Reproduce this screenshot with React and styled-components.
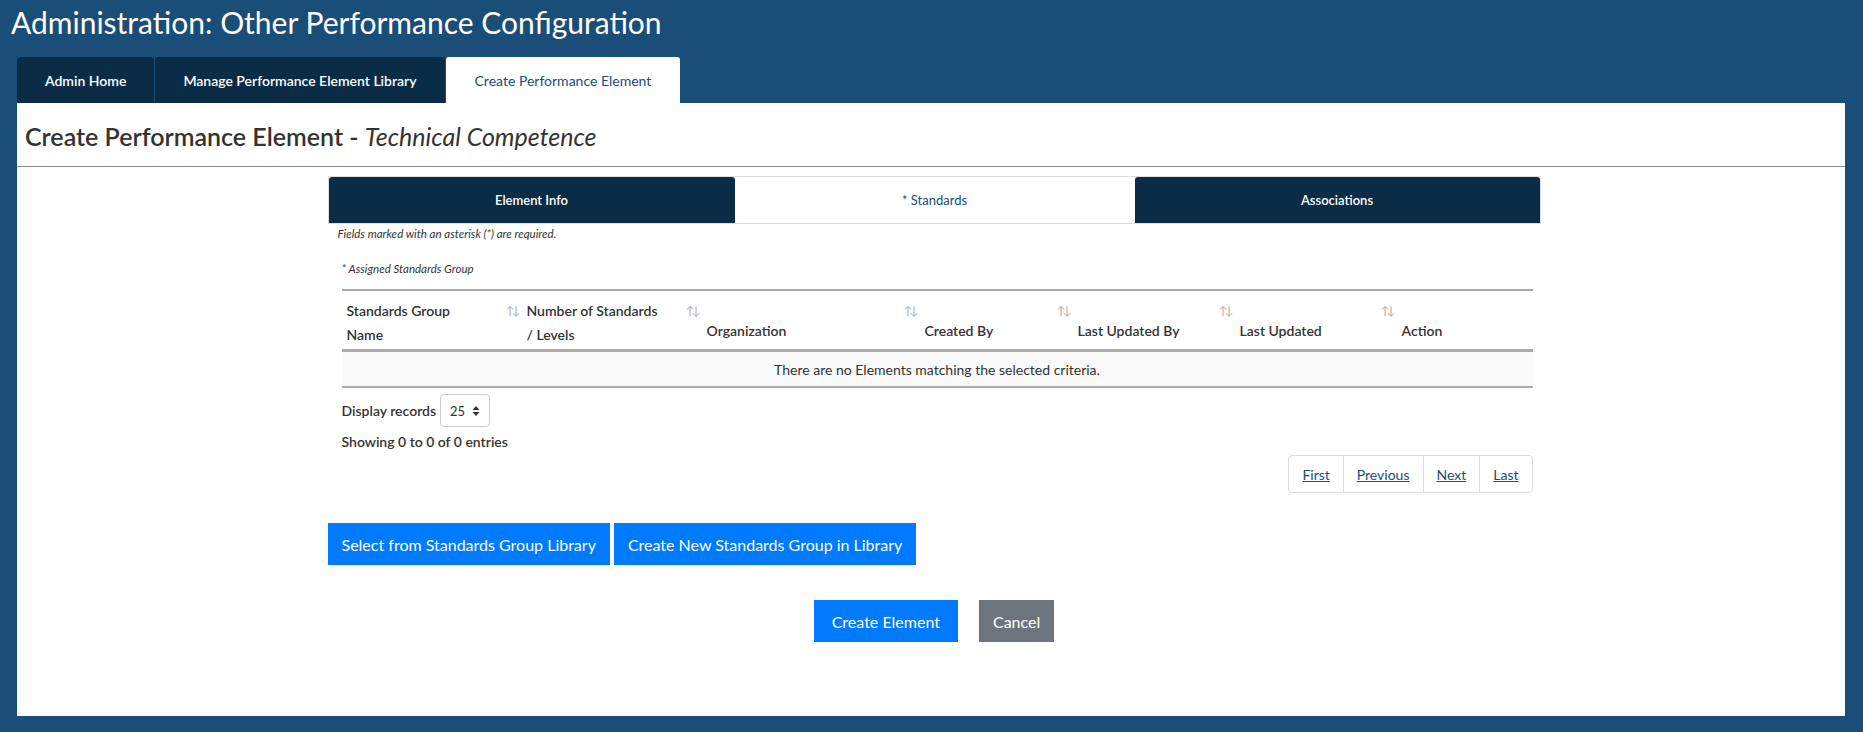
import React from 'react';
import styled, { createGlobalStyle } from 'styled-components';

const Global = createGlobalStyle`
  body {
    margin: 0;
    background: #1a4d78;
    font-family: Lato, "Noto Sans", sans-serif;
    color: #222;
  }
`;

const Page = styled.div`
  padding: 0 18px 16px 17px;
  min-height: 732px;
  box-sizing: border-box;
`;

const Title = styled.h1`
  margin: 0;
  padding: 2px 0 0 0;
  margin-left: -6px;
  height: 55px;
  font-size: 30px;
  font-weight: 400;
  color: #fff;
  line-height: 40px;
`;

const TopTabs = styled.div`
  display: flex;
  gap: 1px;
`;

const TopTab = styled.div`
  height: 46px;
  display: flex;
  align-items: center;
  padding: 0 ${(p) => p.$pad}px;
  font-size: 14px;
  border-radius: 3px 3px 0 0;
  background: ${(p) => (p.$active ? '#fff' : '#0a2c46')};
  color: ${(p) => (p.$active ? '#1a4d78' : '#fff')};
  font-weight: ${(p) => (p.$active ? 400 : 600)};
`;

const Panel = styled.div`
  background: #fff;
  height: 613px;
`;

const Heading = styled.h2`
  margin: 0;
  padding: 18px 8px 0;
  height: 45px;
  font-size: 25px;
  font-weight: 600;
  color: #333;
  border-bottom: 1px solid #888;
  em {
    font-weight: 400;
  }
`;

const Content = styled.div`
  width: 1213px;
  margin: 9px auto 0;
  padding-left: 6px;
`;

const SubTabs = styled.div`
  display: flex;
  border: 1px solid #ddd;
  height: 46px;
`;

const SubTab = styled.div`
  flex: ${(p) => p.$w};
  display: flex;
  align-items: center;
  justify-content: center;
  font-size: 13px;
  border-radius: 3px 3px 0 0;
  background: ${(p) => (p.$active ? '#fff' : '#0a2c46')};
  color: ${(p) => (p.$active ? '#1a4d78' : '#fff')};
  font-weight: ${(p) => (p.$active ? 400 : 600)};
`;

const Note = styled.div`
  font-size: 11.5px;
  font-style: italic;
  color: #333;
  margin: ${(p) => p.$m};
`;

const Table = styled.div`
  margin: 14px 8px 0 14px;
  border-top: 2px solid #aaa;
`;

const HeadRow = styled.div`
  display: grid;
  grid-template-columns: 180px 180px 218px 153px 162px 162px 1fr;
  height: 58px;
  border-bottom: 3px solid #aaa;
`;

const HeadCell = styled.div`
  position: relative;
  padding: 8px 5px 0;
  font-size: 14px;
  font-weight: 600;
  line-height: 24px;
  color: #333;
  display: flex;
  flex-direction: column;
  justify-content: ${(p) => (p.$two ? 'flex-start' : 'flex-end')};
  padding-bottom: ${(p) => (p.$two ? 0 : 6)}px;
`;

const Sort = styled.span`
  position: absolute;
  right: 4px;
  top: 8px;
  color: #bbb;
  font-size: 12px;
  letter-spacing: -3px;
`;

const Empty = styled.div`
  background: #f9f9f9;
  height: 34px;
  border-bottom: 2px solid #aaa;
  display: flex;
  align-items: center;
  justify-content: center;
  font-size: 14px;
  color: #333;
`;

const Footer = styled.div`
  margin: 6px 8px 0 14px;
  font-size: 14px;
  font-weight: 600;
  color: #333;
`;

const Inline = styled.div`
  display: flex;
  align-items: center;
  gap: 4px;
`;

const Select = styled.div`
  width: 50px;
  height: 33px;
  border: 1px solid #ccc;
  border-radius: 4px;
  display: flex;
  align-items: center;
  justify-content: space-between;
  padding: 0 9px;
  box-sizing: border-box;
  font-weight: 400;
  font-size: 13px;
`;

const Showing = styled.div`
  margin-top: 6px;
`;

const Pager = styled.div`
  display: flex;
  justify-content: flex-end;
  margin-top: 5px;
`;

const PageGroup = styled.div`
  display: flex;
  border: 1px solid #ddd;
  border-radius: 4px;
  height: 36px;
`;

const PageLink = styled.a`
  display: flex;
  align-items: center;
  padding: 0 ${(p) => p.$pad || 13}px;
  font-size: 14px;
  font-weight: 400;
  color: #1a4d78;
  text-decoration: underline;
  & + & {
    border-left: 1px solid #ddd;
  }
`;

const Actions = styled.div`
  display: flex;
  gap: 4px;
  margin-top: 30px;
`;

const Button = styled.button`
  height: 42px;
  padding: 0 ${(p) => p.$pad || 14}px;
  border: none;
  border-radius: 0;
  background: ${(p) => (p.$gray ? '#6c757d' : '#007bff')};
  color: #fff;
  font-family: inherit;
  font-size: 16px;
`;

const Bottom = styled.div`
  display: flex;
  justify-content: center;
  gap: 21px;
  margin-top: 35px;
`;

const cols = [
  ['Standards Group', 'Name', true],
  ['Number of Standards', '/ Levels', true],
  ['', 'Organization', true],
  ['', 'Created By', true],
  ['', 'Last Updated By', true],
  ['', 'Last Updated', true],
  ['', 'Action', false],
];

export default function App() {
  return (
    <Page>
      <Global />
      <Title>Administration: Other Performance Configuration</Title>
      <TopTabs>
        <TopTab $pad={28}>Admin Home</TopTab>
        <TopTab $pad={28}>Manage Performance Element Library</TopTab>
        <TopTab $pad={29} $active>Create Performance Element</TopTab>
      </TopTabs>
      <Panel>
        <Heading>
          Create Performance Element - <em>Technical Competence</em>
        </Heading>
        <Content>
          <SubTabs>
            <SubTab $w={406}>Element Info</SubTab>
            <SubTab $w={400} $active>* Standards</SubTab>
            <SubTab $w={405}>Associations</SubTab>
          </SubTabs>
          <Note $m="3px 0 0 10px">Fields marked with an asterisk (*) are required.</Note>
          <Note $m="22px 0 0 14px">* Assigned Standards Group</Note>
          <Table>
            <HeadRow>
              {cols.map(([a, b, s], i) => (
                <HeadCell key={i} $two={!!a}>
                  {a && <span>{a}</span>}
                  <span>{b}</span>
                  {s && <Sort>↑↓</Sort>}
                </HeadCell>
              ))}
            </HeadRow>
            <Empty>There are no Elements matching the selected criteria.</Empty>
          </Table>
          <Footer>
            <Inline>
              Display records
              <Select>
                25
                <svg width="8" height="12" viewBox="0 0 8 12">
                  <path d="M4 1 L7.5 5 H0.5Z M4 11 L7.5 7 H0.5Z" fill="#333" />
                </svg>
              </Select>
            </Inline>
            <Showing>Showing 0 to 0 of 0 entries</Showing>
            <Pager>
              <PageGroup>
                <PageLink>First</PageLink>
                <PageLink>Previous</PageLink>
                <PageLink>Next</PageLink>
                <PageLink>Last</PageLink>
              </PageGroup>
            </Pager>
          </Footer>
          <Actions>
            <Button>Select from Standards Group Library</Button>
            <Button>Create New Standards Group in Library</Button>
          </Actions>
          <Bottom>
            <Button $pad={18}>Create Element</Button>
            <Button $pad={14} $gray>Cancel</Button>
          </Bottom>
        </Content>
      </Panel>
    </Page>
  );
}
